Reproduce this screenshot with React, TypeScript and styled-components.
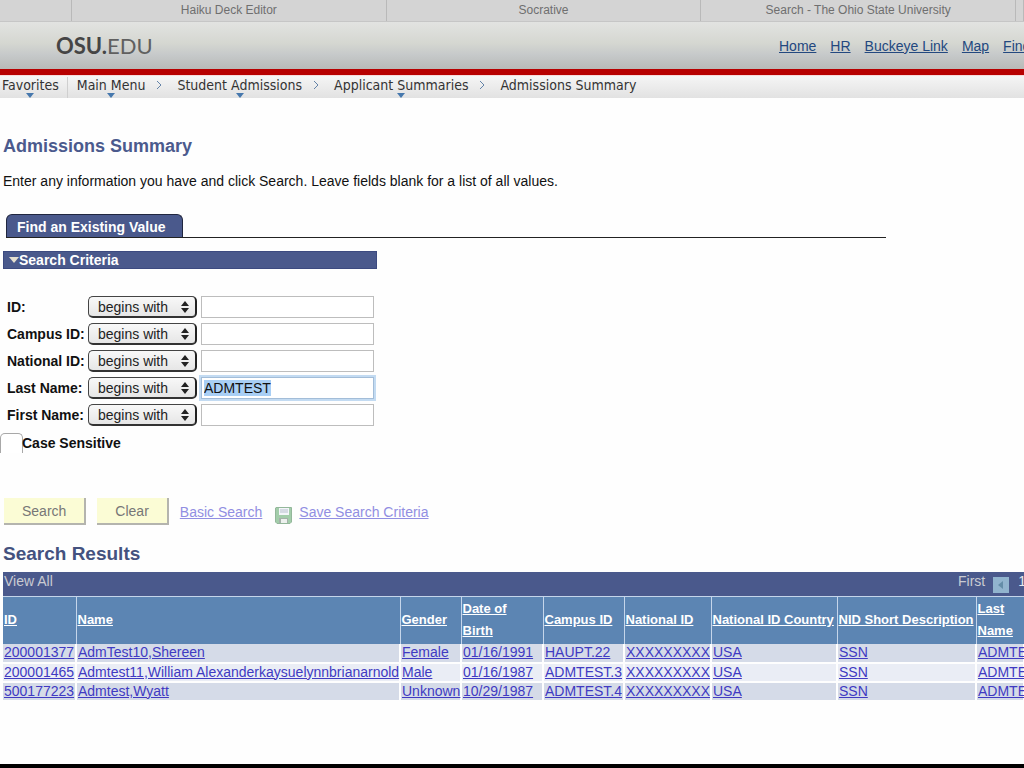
import React, { useEffect, useRef } from "react";
import styled, { createGlobalStyle } from "styled-components";

const GlobalStyle = createGlobalStyle`
  * { box-sizing: border-box; }
  body {
    margin: 0;
    background: #fefefe;
    color: #111;
    font: 14px/20px "Liberation Sans", Arial, sans-serif;
  }
`;

const Page = styled.div`
  display: flex;
  flex-direction: column;
  min-height: 100vh;
  overflow: hidden;
  border-bottom: 4px solid #000;
`;

const TabStrip = styled.div`
  display: flex;
  height: 22px;
  background: #d4d4d4;
  border-bottom: 1px solid #c6c6c6;
  overflow: hidden;
`;

const BrowserTab = styled.div<{ $edge?: number }>`
  flex: ${(p) => (p.$edge ? `0 0 ${p.$edge}px` : "1 1 0")};
  border-right: 1px solid #b9b9b9;
  color: #6f6f6f;
  font-size: 12px;
  line-height: 20px;
  text-align: center;
  white-space: nowrap;
`;

const Masthead = styled.header`
  display: flex;
  align-items: center;
  justify-content: space-between;
  height: 53px;
  padding-left: 56px;
  border-bottom: 6px solid #b70000;
  background: linear-gradient(#e2e3e1, #d5d7d1 45%, #c6c9ca 70%, #b8bab7);
`;

const Logo = styled.div`
  color: #606060;
  font: 400 22px/28px Lato, sans-serif;

  strong {
    color: #454545;
    font-weight: 700;
  }
`;

const TopLinks = styled.nav`
  display: flex;
  flex: 0 0 245px;
  gap: 14px;
  overflow: hidden;
  white-space: nowrap;

  a {
    color: #23487f;
  }
`;

const Crumbs = styled.nav`
  display: flex;
  height: 23px;
  padding-left: 2px;
  background: linear-gradient(#f5f5f5, #e2e2e2);
  border-top: 1px solid #f7dada;
  font: 14px/18px "DejaVu Sans Condensed", Tahoma, sans-serif;
  white-space: nowrap;
`;

const Crumb = styled.button`
  display: flex;
  flex-direction: column;
  align-items: center;
  padding: 0;
  border: 0;
  background: none;
  color: #333;
  font: inherit;

  svg {
    margin-top: -1px;
  }
`;

const CrumbDivider = styled.span`
  width: 1px;
  margin: 1px 9px 0 8px;
  background: #cfcfcf;
`;

const CrumbArrow = styled.svg`
  flex: 0 0 6px;
  margin: 4px 15px 0 11px;
`;

const Main = styled.main`
  flex: 1;
  padding: 37px 0 0 3px;
`;

const Title = styled.h1`
  margin: 0;
  color: #4b5a8d;
  font-size: 18px;
  line-height: 22px;
`;

const Intro = styled.p`
  margin: 14px 0 23px;
`;

const TabRow = styled.div`
  display: flex;
  max-width: 880px;
  margin-left: 3px;
  border-bottom: 1px solid #222;
`;

const FormTab = styled.button`
  height: 23px;
  padding: 2px 16px 0 10px;
  border: 1px solid #20263f;
  border-width: 1px 1px 0;
  border-radius: 6px 6px 0 0;
  background: #4a598c;
  color: #fff;
  font: bold 14px/20px "Liberation Sans", Arial, sans-serif;
`;

const CriteriaHead = styled.button`
  display: flex;
  align-items: center;
  width: 374px;
  height: 18px;
  margin: 13px 0 27px;
  padding: 0 5px;
  border: 1px solid #3c4a80;
  background: #4a598c;
  color: #fff;
  font: bold 14px/16px "Liberation Sans", Arial, sans-serif;
`;

const Criteria = styled.div`
  display: grid;
  gap: 5px;
  padding-left: 4px;
`;

const Field = styled.div`
  display: grid;
  grid-template-columns: 77px 109px 173px;
  column-gap: 4px;
  align-items: center;

  label {
    font-weight: bold;
    white-space: nowrap;
  }
`;

const SelectBox = styled.div`
  display: grid;
  grid-template-columns: 1fr 16px;
  align-items: center;

  > * {
    grid-row: 1;
  }

  svg {
    grid-column: 2;
    pointer-events: none;
  }
`;

const Select = styled.select`
  grid-column: 1 / 3;
  height: 22px;
  padding: 0 9px;
  appearance: none;
  border: 1px solid #444;
  border-right: 2px solid #222;
  border-bottom: 2px solid #333;
  border-radius: 5px;
  background: linear-gradient(#f8f8f8, #e6e6e6);
  color: #222;
  font: 14px/18px "Liberation Sans", Arial, sans-serif;
`;

const TextBox = styled.input`
  width: 100%;
  height: 22px;
  padding: 0 2px;
  border: 1px solid #bdbdbd;
  background: #fff;
  color: #111;
  font: 14px/18px "Liberation Sans", Arial, sans-serif;

  &:focus {
    outline: 0;
    border-color: #a3bdd8;
    box-shadow: 0 0 0 2px #c3dbf2;
  }

  &::selection {
    background: #a9cff5;
    color: #111;
  }
`;

const CaseRow = styled.label`
  display: flex;
  align-items: center;
  margin: 7px 0 45px -3px;
  font-weight: bold;
`;

const CheckBox = styled.input`
  width: 23px;
  height: 20px;
  margin: 0 -1px 0 0;
  appearance: none;
  border: 1px solid #a8a8a8;
  border-bottom: 0;
  border-radius: 5px 5px 0 0;
  background: #fff;
`;

const Actions = styled.div`
  display: flex;
  align-items: center;
  padding-left: 1px;

  a {
    color: #918ee2;
  }

  svg {
    margin: 7px 7px 0 13px;
  }
`;

const ActionButton = styled.button`
  height: 27px;
  margin-right: 11px;
  padding: 0 18px;
  border: 0 solid #b4b4ae;
  border-width: 0 2px 2px 0;
  background: #fbfcd5;
  color: #777;
  font: 14px/20px "Liberation Sans", Arial, sans-serif;
`;

const ResultsTitle = styled.h2`
  margin: 18px 0 7px;
  color: #44527f;
  font-size: 19px;
  line-height: 22px;
`;

const ResultsBar = styled.div`
  display: flex;
  align-items: flex-start;
  justify-content: space-between;
  height: 24px;
  padding-left: 1px;
  background: #4a598c;
  color: #c9cbd2;
  line-height: 19px;
`;

const BarButton = styled.button`
  padding: 0;
  border: 0;
  background: none;
  color: inherit;
  font: inherit;
`;

const Pager = styled.div`
  display: flex;
  flex: 0 0 66px;
  overflow: hidden;

  svg {
    flex: 0 0 16px;
    margin: 5px 9px 0 8px;
  }

  b {
    color: #e8e8ec;
    font-weight: normal;
  }
`;

const TableClip = styled.div`
  overflow: hidden;
`;

const Table = styled.table`
  table-layout: fixed;
  width: 1021px;
  border-collapse: collapse;
  white-space: nowrap;

  th {
    height: 47px;
    padding: 0 1px;
    border: 0 solid #c5d5ea;
    border-width: 1px 1px 0 0;
    background: #5c85b3;
    color: #fff;
    font-size: 13px;
    line-height: 22px;
    text-align: left;
    white-space: normal;
  }

  td {
    height: 19px;
    padding: 0 0 0 1px;
    border: 0 solid #fefefe;
    border-width: 0 2px 2px 0;
    background: #d5dbe8;
    line-height: 17px;
  }

  tbody tr:nth-child(even) td {
    background: #eaedf5;
  }

  th a {
    color: #fff;
  }

  td a {
    color: #403ac2;
  }
`;

const Column = styled.col<{ $width: number }>`
  width: ${(p) => p.$width}px;
`;

const DownArrow = () => (
  <svg width="8" height="5" viewBox="0 0 8 5">
    <path d="M0 0h8L4 5z" fill="#4678ad" />
  </svg>
);

const Chevron = () => (
  <CrumbArrow width="6" height="10" viewBox="0 0 6 10" fill="none" stroke="#6383a8">
    <path d="M1 1l4 4-4 4" />
  </CrumbArrow>
);

const Disk = () => (
  <svg width="17" height="17" viewBox="0 0 17 17">
    <path d="M1 0.5h15.5v14.5l-1.5 1.5H2l-1.500-1.500V1z" fill="#a3cdaa" stroke="#93b79a" />
    <path d="M4 1h10v7H4z" fill="#f4f6fa" />
    <path d="M5 3h8M5 5h8" stroke="#b7bfcd" />
    <path d="M4 11h9v5H4z" fill="#a5b1a9" />
    <path d="M6 12h6v4H6z" fill="#edf1ee" />
  </svg>
);

const fields = [
  { id: "emplid", label: "ID:" },
  { id: "campus", label: "Campus ID:" },
  { id: "national", label: "National ID:" },
  { id: "last", label: "Last Name:", value: "ADMTEST" },
  { id: "first", label: "First Name:" },
];

const columns = [
  { lines: ["ID"], width: 73 },
  { lines: ["Name"], width: 324 },
  { lines: ["Gender"], width: 61 },
  { lines: ["Date of", "Birth"], width: 82 },
  { lines: ["Campus ID"], width: 81 },
  { lines: ["National ID"], width: 87 },
  { lines: ["National ID Country"], width: 126 },
  { lines: ["NID Short Description"], width: 139 },
  { lines: ["Last", "Name"], width: 48 },
];

const rows = [
  ["200001377", "AdmTest10,Shereen", "Female", "01/16/1991", "HAUPT.22", "XXXXXXXXX", "USA", "SSN", "ADMTEST"],
  ["200001465", "Admtest11,William Alexanderkaysuelynnbrianarnold", "Male", "01/16/1987", "ADMTEST.3", "XXXXXXXXX", "USA", "SSN", "ADMTEST"],
  ["500177223", "Admtest,Wyatt", "Unknown", "10/29/1987", "ADMTEST.4", "XXXXXXXXX", "USA", "SSN", "ADMTEST"],
];

export default function App() {
  const lastName = useRef<HTMLInputElement>(null);

  useEffect(() => {
    lastName.current?.focus();
    lastName.current?.select();
  }, []);

  return (
    <Page>
      <GlobalStyle />
      <TabStrip>
        <BrowserTab $edge={72} />
        <BrowserTab>Haiku Deck Editor</BrowserTab>
        <BrowserTab>Socrative</BrowserTab>
        <BrowserTab>Search - The Ohio State University</BrowserTab>
        <BrowserTab $edge={8} />
      </TabStrip>
      <Masthead>
        <Logo>
          <strong>OSU.</strong>EDU
        </Logo>
        <TopLinks>
          {["Home", "HR", "Buckeye Link", "Map", "Find"].map((name) => (
            <a href="#" key={name}>{name}</a>
          ))}
        </TopLinks>
      </Masthead>
      <Crumbs>
        <Crumb>Favorites<DownArrow /></Crumb>
        <CrumbDivider />
        <Crumb>Main Menu<DownArrow /></Crumb>
        <Chevron />
        <Crumb>Student Admissions<DownArrow /></Crumb>
        <Chevron />
        <Crumb>Applicant Summaries<DownArrow /></Crumb>
        <Chevron />
        <Crumb>Admissions Summary</Crumb>
      </Crumbs>
      <Main>
        <Title>Admissions Summary</Title>
        <Intro>Enter any information you have and click Search. Leave fields blank for a list of all values.</Intro>
        <TabRow>
          <FormTab>Find an Existing Value</FormTab>
        </TabRow>
        <CriteriaHead>
          <svg width="10" height="6" viewBox="0 0 10 6">
            <path d="M0 0h10L5 6z" fill="#e6e0cf" />
          </svg>
          Search Criteria
        </CriteriaHead>
        <Criteria>
          {fields.map((f) => (
            <Field key={f.id}>
              <label htmlFor={f.id}>{f.label}</label>
              <SelectBox>
                <Select aria-label={`${f.label} match`}>
                  <option>begins with</option>
                </Select>
                <svg width="8" height="12" viewBox="0 0 8 12">
                  <path d="M4 0l4 5H0zM4 12l4-5H0z" fill="#222" />
                </svg>
              </SelectBox>
              <TextBox id={f.id} defaultValue={f.value} ref={f.value ? lastName : undefined} />
            </Field>
          ))}
        </Criteria>
        <CaseRow>
          <CheckBox type="checkbox" />
          Case Sensitive
        </CaseRow>
        <Actions>
          <ActionButton>Search</ActionButton>
          <ActionButton>Clear</ActionButton>
          <a href="#">Basic Search</a>
          <Disk />
          <a href="#">Save Search Criteria</a>
        </Actions>
        <ResultsTitle>Search Results</ResultsTitle>
        <ResultsBar>
          <BarButton>View All</BarButton>
          <Pager>
            First
            <svg width="16" height="16" viewBox="0 0 16 16">
              <path d="M0 0h16v16H0z" fill="#91b4ce" />
              <path d="M10 4v8L5 8z" fill="#648da8" />
            </svg>
            <b>1</b>
          </Pager>
        </ResultsBar>
        <TableClip>
          <Table>
            <colgroup>
              {columns.map((c) => <Column key={c.lines[0]} $width={c.width} />)}
            </colgroup>
            <thead>
              <tr>
                {columns.map((c) => (
                  <th key={c.lines[0]}>
                    <a href="#">
                      {c.lines[0]}
                      {c.lines[1] && <><br />{c.lines[1]}</>}
                    </a>
                  </th>
                ))}
              </tr>
            </thead>
            <tbody>
              {rows.map((row) => (
                <tr key={row[0]}>
                  {row.map((cell, i) => (
                    <td key={columns[i].lines[0]}><a href="#">{cell}</a></td>
                  ))}
                </tr>
              ))}
            </tbody>
          </Table>
        </TableClip>
      </Main>
    </Page>
  );
}
